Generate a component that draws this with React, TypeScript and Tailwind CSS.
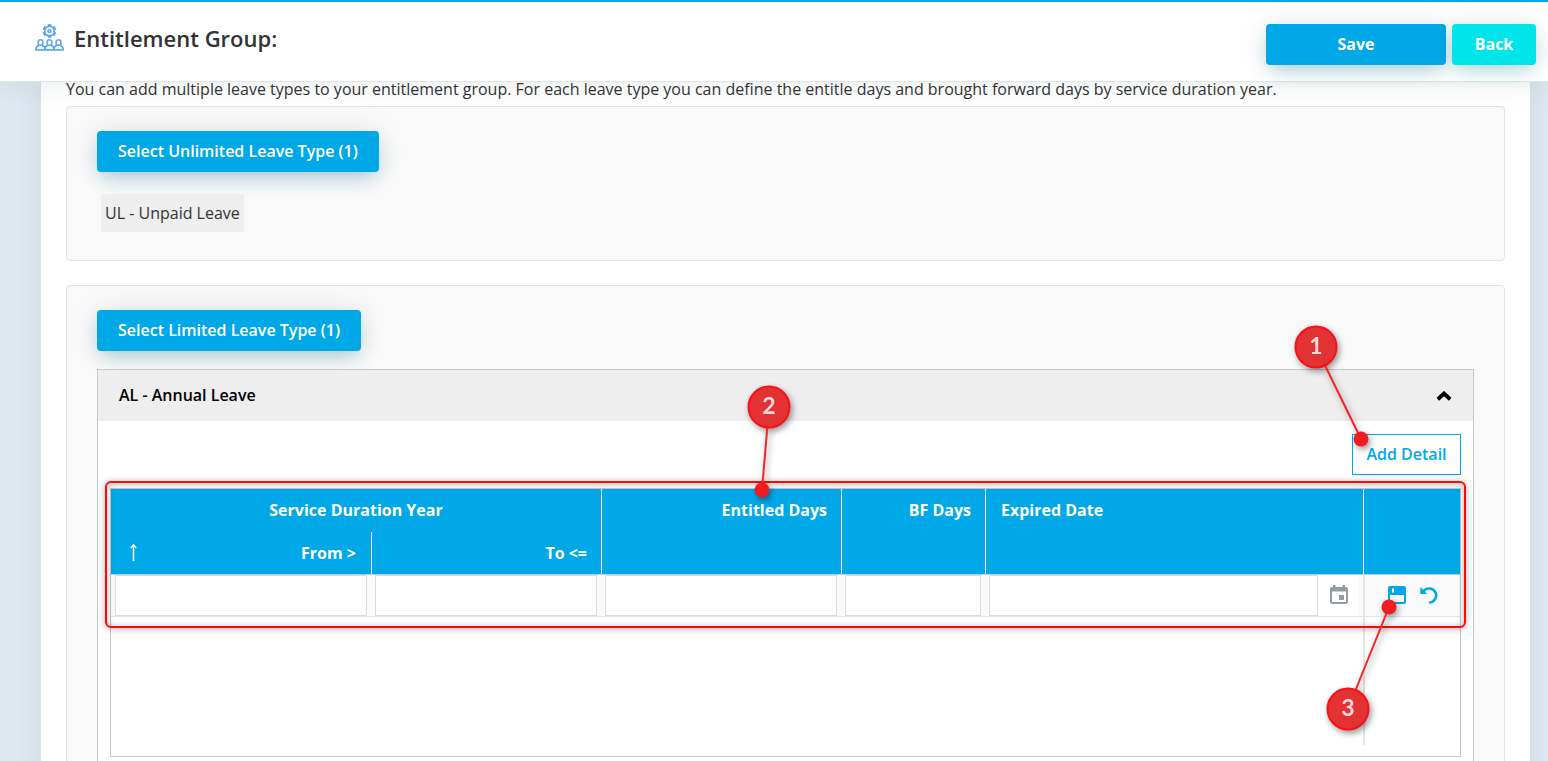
import { useState } from "react";
import type { ReactNode } from "react";

type Detail = {
  from: string;
  to: string;
  entitled: string;
  bf: string;
  expired: string;
};

const emptyDetail: Detail = { from: "", to: "", entitled: "", bf: "", expired: "" };

const numberFields: { key: keyof Detail; label: string }[] = [
  { key: "from", label: "Service duration from" },
  { key: "to", label: "Service duration to" },
  { key: "entitled", label: "Entitled days" },
  { key: "bf", label: "BF days" },
];

function GroupIcon() {
  const people = [5.5, 14.5, 23.5];
  const teeth = [0, 60, 120, 180, 240, 300];
  return (
    <svg viewBox="0 0 29 27" className="h-[27px] w-[29px]" fill="none" stroke="#62a8ec" strokeWidth="1.7">
      <circle cx="14.5" cy="7" r="4.7" />
      <circle cx="14.5" cy="7" r="1.5" />
      {teeth.map((a) => (
        <path
          key={a}
          d="M13 2.200V.600h3v1.600"
          fill="#62a8ec"
          strokeWidth="1"
          transform={`rotate(${a} 14.5 7)`}
        />
      ))}
      {people.map((x) => (
        <g key={x} strokeWidth="1.600">
          <path d={`M${x - 2.4} 19v-.8a2.4 2.4 0 0 1 4.8 0v.8a2.4 2.4 0 0 1-4.800 0z`} />
          <path d={`M${x - 1.6} 21.400c-2.400.600-3.100 1.700-3.100 4.500h9.400c0-2.800-.700-3.900-3.100-4.500`} />
        </g>
      ))}
    </svg>
  );
}

function PrimaryButton({ children }: { children: ReactNode }) {
  return (
    <button className="h-[41px] rounded bg-[#00a8e8] px-[21px] pb-[2px] font-semibold text-white shadow-[0_0_30px_rgba(0,0,0,0.08),0_8px_20px_-4px_rgba(0,120,160,0.32)]">
      {children}
    </button>
  );
}

// numbered marker: the dot sits on the anchor, the badge at (dx, dy) from it
function Callout({
  step,
  dx,
  dy,
  className,
}: {
  step: number;
  dx: number;
  dy: number;
  className: string;
}) {
  return (
    <svg
      className={`pointer-events-none absolute z-20 size-px overflow-visible drop-shadow-[2px_3px_3px_rgba(0,0,0,0.4)] ${className}`}
    >
      <line x1={0} y1={0} x2={dx} y2={dy} stroke="#f92226" strokeWidth="2" />
      <circle r="7.5" fill="#f01c20" />
      <circle cx={dx} cy={dy} r="20.5" fill="#e23234" stroke="#fb1014" strokeWidth="2" />
      <text
        x={dx}
        y={dy + 7}
        textAnchor="middle"
        fill="#ffd9d9"
        className="font-[Lato,sans-serif] text-[23px] font-bold"
      >
        {step}
      </text>
    </svg>
  );
}

export default function App() {
  const [open, setOpen] = useState(true);
  const [detail, setDetail] = useState<Detail>(emptyDetail);

  const head = "border-l border-white align-top font-bold leading-[42px]";
  const cell = "border-t border-b border-t-[#c8c8c8] border-b-[#e5e5e5]";
  const input = "block h-[41px] w-full border border-[#dcdae5] bg-white px-2 outline-none";

  return (
    <div className="flex h-screen flex-col overflow-hidden bg-[#dfe7ef] font-['Open_Sans',sans-serif] text-base text-[#333]">
      {/* Header */}
      <header className="relative z-30 flex h-[82px] shrink-0 items-center justify-between border-t-2 border-b border-t-[#00a8e8] border-b-[#e3e6e8] bg-white pr-3 pl-[35px] shadow-[0_0_30px_rgba(50,80,80,0.12)]">
        <div className="flex items-center gap-[10px] pb-2">
          <GroupIcon />
          <h1 className="text-[22px] leading-7 font-semibold">Entitlement Group:</h1>
        </div>
        <div className="flex gap-[6px] pt-[6px]">
          <button className="h-[41px] w-[180px] rounded bg-[#00a8e8] pb-[2px] font-bold text-white shadow-[0_0_30px_rgba(0,0,0,0.08),0_8px_20px_-4px_rgba(0,120,160,0.32)]">
            Save
          </button>
          <button className="h-[41px] w-[84px] rounded bg-[#00e5ea] pb-[2px] font-bold text-white shadow-[0_0_30px_rgba(0,0,0,0.08),0_8px_20px_-4px_rgba(0,160,160,0.32)]">
            Back
          </button>
        </div>
      </header>

      <main className="mr-[18px] ml-[41px] flex-1 bg-white px-[25px] shadow-[0_0_24px_rgba(80,110,140,0.1)]">
        <p className="mb-[10px] leading-[14px]">
          You can add multiple leave types to your entitlement group. For each leave type you can
          define the entitle days and brought forward days by service duration year.
        </p>

        {/* Unlimited leave types */}
        <section className="mb-6 rounded border border-[#e3e4e9] bg-[#f9f9f9] px-[30px] pt-6 pb-7">
          <PrimaryButton>Select Unlimited Leave Type (1)</PrimaryButton>
          <div className="relative mt-[22px] ml-1 w-fit bg-[#eee] px-1 leading-[38px]">
            UL - Unpaid Leave
          </div>
        </section>

        {/* Limited leave types */}
        <section className="rounded border border-[#e3e4e9] bg-[#f9f9f9] px-[30px] pt-6 pb-7">
          <PrimaryButton>Select Limited Leave Type (1)</PrimaryButton>

          <div className="relative mt-[18px] border border-[#c8c8c8] bg-white">
            <button
              onClick={() => setOpen(!open)}
              aria-expanded={open}
              className="flex h-[51px] w-full items-center justify-between bg-[#eee] px-[21px] pb-[2px] font-semibold text-black"
            >
              AL - Annual Leave
              <svg viewBox="0 0 16 10" className={open ? "mt-[2px] h-[10px] w-4" : "mt-[2px] h-[10px] w-4 rotate-180"}>
                <path d="M1.800 8.200 8 2.600l6.200 5.600" fill="none" stroke="#000" strokeWidth="4" />
              </svg>
            </button>

            {open && (
              <div className="px-3 pt-[13px] pb-8">
                <div className="mb-[13px] flex justify-end">
                  <div className="relative">
                    <button className="block h-[41px] w-[109px] border border-[#00a8e8] bg-white pb-[2px] font-semibold text-[#00a8e8]">
                      Add Detail
                    </button>
                    <Callout step={1} dx={-45} dy={-92} className="top-[5px] left-[9px]" />
                  </div>
                </div>

                <div className="relative border border-[#c8c8c8] pb-[11px]">
                  <table className="w-full table-fixed border-separate border-spacing-0">
                    <colgroup>
                      <col className="w-[260px]" />
                      <col className="w-[230px]" />
                      <col className="w-[240px]" />
                      <col className="w-[144px]" />
                      <col />
                      <col className="w-[97px]" />
                    </colgroup>
                    <thead className="bg-[#00a8e8] text-white">
                      <tr className="h-[43px]">
                        <th colSpan={2} className="text-center align-top leading-[42px] font-bold">
                          Service Duration Year
                        </th>
                        <th rowSpan={2} className={`relative pr-[14px] text-right ${head}`}>
                          Entitled Days
                          <Callout step={2} dx={7} dy={-83} className="top-px left-[160px]" />
                        </th>
                        <th rowSpan={2} className={`pr-[14px] text-right ${head}`}>
                          BF Days
                        </th>
                        <th rowSpan={2} className={`pl-[15px] text-left ${head}`}>
                          Expired Date
                        </th>
                        <th rowSpan={2} className={head} aria-label="Actions" />
                      </tr>
                      <tr className="h-[42px]">
                        <th className="align-top leading-[42px] font-bold">
                          <div className="flex items-center justify-between pr-[15px] pl-[18px]">
                            <svg viewBox="0 0 9 18" className="h-[18px] w-[9px]">
                              <path d="M4.5 17V2M1.8 4l2.7-3 2.7 3" fill="none" stroke="#fff" strokeWidth="1.5" />
                            </svg>
                            From &gt;
                          </div>
                        </th>
                        <th className={`pr-[14px] text-right ${head}`}>To &lt;=</th>
                      </tr>
                    </thead>
                    <tbody>
                      <tr className="bg-[#fafafa]">
                        {numberFields.map((f) => (
                          <td key={f.key} className={`px-1 ${cell}`}>
                            <input
                              type="text"
                              aria-label={f.label}
                              className={input}
                              value={detail[f.key]}
                              onChange={(e) => setDetail({ ...detail, [f.key]: e.target.value })}
                            />
                          </td>
                        ))}
                        <td className={`px-1 ${cell}`}>
                          <div className="flex bg-white">
                            <input
                              type="text"
                              aria-label="Expired date"
                              className={input}
                              value={detail.expired}
                              onChange={(e) => setDetail({ ...detail, expired: e.target.value })}
                            />
                            <button aria-label="Pick date" className="flex w-[41px] shrink-0 items-center justify-center pb-[2px]">
                              <svg viewBox="0 0 18 20" className="h-5 w-[18px]" fill="#959ba3">
                                <path
                                  fillRule="evenodd"
                                  d="M3 0h2.500v2h7V0H15v2h1a2 2 0 0 1 2 2v13a2 2 0 0 1-2 2H2a2 2 0 0 1-2-2V4a2 2 0 0 1 2-2h1zM2 6.500v10.500h14V6.500z"
                                />
                                <path d="M9 10h5v5H9z" />
                              </svg>
                            </button>
                          </div>
                        </td>
                        <td className={`border-l-2 border-l-[#e5e5e5] ${cell}`}>
                          <div className="relative flex items-center justify-center gap-[14px] pb-[2px] text-[#00a8e8]">
                            <button aria-label="Save detail">
                              <svg viewBox="0 0 18 18" className="size-[18px]" fill="currentColor">
                                <path
                                  fillRule="evenodd"
                                  d="M2 0h14a2 2 0 0 1 2 2v14a2 2 0 0 1-2 2H2a2 2 0 0 1-2-2V2a2 2 0 0 1 2-2zM2 9v7h14V9zM4 2.500v4h2v-4z"
                                />
                              </svg>
                            </button>
                            <button aria-label="Undo" onClick={() => setDetail(emptyDetail)}>
                              <svg viewBox="0 0 18 18" className="size-[18px]">
                                <path d="M.300 1v7h7z" fill="currentColor" />
                                <path
                                  d="M3.600 5.200A7 7 0 1 1 9.200 16.500"
                                  fill="none"
                                  stroke="currentColor"
                                  strokeWidth="2.600"
                                />
                              </svg>
                            </button>
                            <Callout step={3} dx={-41} dy={102} className="top-[21px] left-6" />
                          </div>
                        </td>
                      </tr>
                      <tr className="h-32">
                        <td colSpan={5} />
                        <td className="border-l-2 border-[#e5e5e5]" />
                      </tr>
                    </tbody>
                  </table>

                  {/* highlight around the header and the edited row */}
                  <div className="pointer-events-none absolute -inset-x-[6px] -top-2 z-10 h-[147px] rounded-md border-2 border-[#f80c0c] shadow-[0_1px_7px_rgba(0,0,0,0.3),inset_0_1px_7px_rgba(0,0,0,0.3)]" />
                </div>
              </div>
            )}
          </div>
        </section>
      </main>
    </div>
  );
}
